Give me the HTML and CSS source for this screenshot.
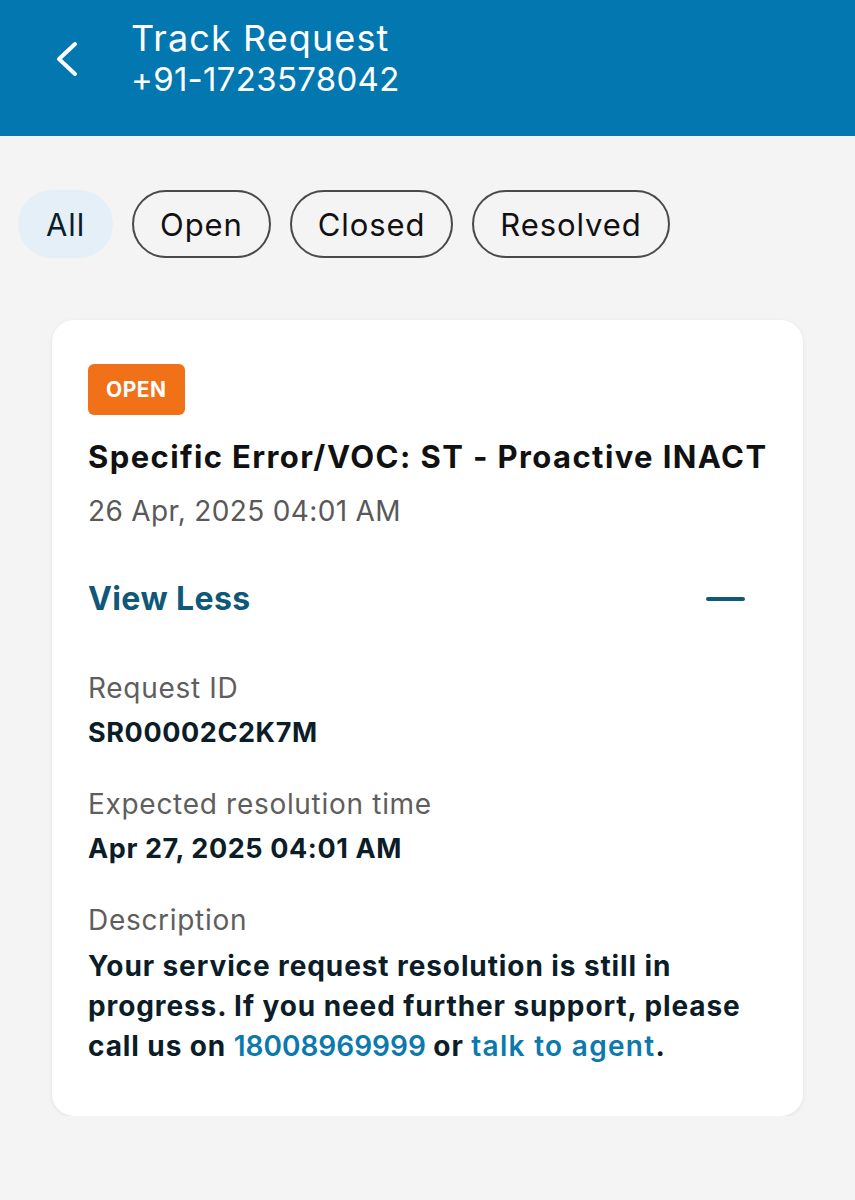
FILE: index.html
```html
<!DOCTYPE html>
<html lang="en">
<head>
    <meta charset="UTF-8">
    <meta name="viewport" content="width=device-width, initial-scale=1.0">
    <title>Track Request</title>
    <link rel="stylesheet" href="styles.css">
</head>
<body>
    <!-- Top bar -->
    <header class="topbar">
        <button class="back-btn" aria-label="Back">
            <svg width="26" height="40" viewBox="0 0 26 40">
                <polyline points="20,4 4,19 20,34" fill="none" stroke="#fff" stroke-width="4" stroke-linecap="round" stroke-linejoin="round"/>
            </svg>
        </button>
        <div class="topbar-text">
            <div class="topbar-title">Track Request</div>
            <div class="topbar-sub">+91-1723578042</div>
        </div>
    </header>

    <!-- Filter chips -->
    <div class="filters">
        <span class="chip active">All</span>
        <span class="chip">Open</span>
        <span class="chip">Closed</span>
        <span class="chip">Resolved</span>
    </div>

    <!-- Request card -->
    <div class="card">
        <span class="badge">OPEN</span>
        <div class="card-title">Specific Error/VOC: ST - Proactive INACTIVE</div>
        <div class="card-date">26 Apr, 2025 04:01 AM</div>

        <div class="toggle-row">
            <span class="toggle-label">View Less</span>
            <span class="toggle-icon"></span>
        </div>

        <div class="field">
            <div class="field-label">Request ID</div>
            <div class="field-value">SR00002C2K7M</div>
        </div>
        <div class="field">
            <div class="field-label">Expected resolution time</div>
            <div class="field-value">Apr 27, 2025 04:01 AM</div>
        </div>
        <div class="field">
            <div class="field-label">Description</div>
            <p class="field-desc">Your service request resolution is still in progress. If you need further support, please call us on <a href="#" class="link">18008969999</a> or <a href="#" class="link agent">talk to agent</a>.</p>
        </div>
    </div>
</body>
</html>
```

FILE: styles.css
```css
/* Base */
body {
    margin: 0;
    font-family: Inter, Roboto, "Liberation Sans", sans-serif;
    background-color: #f4f4f4;
    color: #0b1d28;
}

/* Top bar */
.topbar {
    height: 136px;
    background-color: #0277b0;
    color: #ffffff;
    display: flex;
    align-items: flex-start;
    box-sizing: border-box;
    padding: 17px 0 0 55px;
}

.back-btn {
    background: none;
    border: none;
    padding: 0;
    margin-top: 23px;
    width: 76px;
    text-align: left;
    cursor: pointer;
}

.topbar-title {
    font-size: 36px;
    line-height: 42px;
    letter-spacing: 1.1px;
}

.topbar-sub {
    font-size: 33px;
    line-height: 40px;
    letter-spacing: 0.3px;
}

/* Filters */
.filters {
    display: flex;
    gap: 19px;
    padding: 54px 0 0 18px;
}

.chip {
    height: 68px;
    box-sizing: border-box;
    padding: 0 26px;
    border: 2px solid #4a4a4a;
    border-radius: 34px;
    display: flex;
    align-items: center;
    font-size: 31px;
    letter-spacing: 0.9px;
    color: #111;
}

.chip.active {
    border-color: transparent;
    background-color: #e4eff7;
    color: #0b1d28;
}

/* Card */
.card {
    margin: 62px 52px 0 52px;
    background-color: #ffffff;
    border-radius: 22px;
    box-shadow: 0 1px 4px rgba(0, 0, 0, 0.08);
    padding: 44px 36px 50px 36px;
}

.badge {
    display: inline-block;
    background-color: #f07117;
    color: #ffffff;
    font-weight: 700;
    font-size: 21px;
    line-height: 51px;
    padding: 0 18px;
    letter-spacing: 0.5px;
    border-radius: 6px;
}

.card-title {
    margin-top: 22px;
    font-size: 31px;
    font-weight: 700;
    letter-spacing: 1.4px;
    white-space: nowrap;
    overflow: hidden;
    color: #111;
    line-height: 40px;
}

.card-date {
    margin-top: 16px;
    font-size: 28px;
    letter-spacing: 0.35px;
    color: #595959;
    line-height: 36px;
}

.toggle-row {
    display: flex;
    align-items: center;
    justify-content: space-between;
    margin-top: 49px;
    padding-right: 22px;
}

.toggle-label {
    font-size: 32px;
    font-weight: 700;
    letter-spacing: 0.4px;
    color: #0f5878;
    line-height: 42px;
}

.toggle-icon {
    width: 39px;
    height: 4px;
    border-radius: 2px;
    background-color: #0f5878;
}

.field {
    margin-top: 50px;
}

.field + .field {
    margin-top: 35px;
}

.field-label {
    font-size: 28px;
    letter-spacing: 0.7px;
    color: #5e5e5e;
    line-height: 36px;
}

.field-value {
    margin-top: 9px;
    font-size: 27px;
    font-weight: 700;
    letter-spacing: 0.6px;
    line-height: 36px;
}

.field-desc {
    margin: 8px 0 0 0;
    font-size: 28px;
    font-weight: 700;
    letter-spacing: 0.9px;
    line-height: 40px;
}

.link {
    color: #0c79ad;
    text-decoration: none;
    font-weight: 600;
    letter-spacing: 0;
}

.link.agent {
    letter-spacing: 1.3px;
}
```
